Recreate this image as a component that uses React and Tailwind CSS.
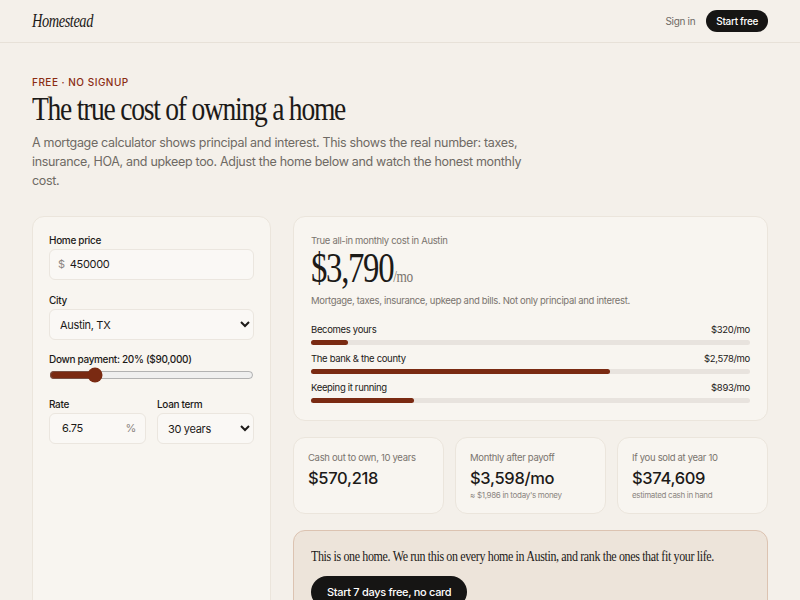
import { useState } from "react";

const SERIF = "font-['Liberation_Serif',serif]";
const SANS = "font-['Inter',sans-serif]";

function fmt(n) {
  return "$" + Math.round(n).toLocaleString("en-US");
}

export default function App() {
  const [price, setPrice] = useState("450000");
  const [city, setCity] = useState("Austin, TX");
  const [down, setDown] = useState(20);
  const [rate, setRate] = useState("6.75");
  const [term, setTerm] = useState("30 years");

  const parts = [
    { label: "Becomes yours", value: 320 },
    { label: "The bank & the county", value: 2578 },
    { label: "Keeping it running", value: 893 },
  ];
  const total = parts.reduce((s, p) => s + p.value, 0) - 1;

  return (
    <div className={`min-h-screen bg-[#f4f0ea] text-[#1c1a18] tracking-[-0.02em] ${SANS}`}>
      {/* --- HEADER --- */}
      <header className="flex items-center justify-between h-[43px] px-8 border-b border-[#e7e1d8]">
        <span
          className={`${SERIF} italic text-[18px] tracking-[-0.03em] origin-left scale-x-[0.8]`}
        >
          Homestead
        </span>
        <div className="flex items-center gap-[11px]">
          <a className="text-[10px] text-[#6f6a64]">Sign in</a>
          <button className="h-[22px] px-[10px] rounded-full bg-[#161514] text-white text-[10px] font-medium">
            Start free
          </button>
        </div>
      </header>

      <main className="px-8 pt-[31px]">
        <p className="text-[10px] leading-[16px] font-medium tracking-[0.05em] text-[#8a2c12]">
          FREE · NO SIGNUP
        </p>
        <h1
          className={`${SERIF} text-[34px] leading-[38px] tracking-[-0.045em] origin-left scale-x-[0.81]`}
        >
          The true cost of owning a home
        </h1>
        <p className="mt-[5px] max-w-[500px] text-[12.5px] leading-[19px] text-[#6f6a64]">
          A mortgage calculator shows principal and interest. This shows the
          real number: taxes, insurance, HOA, and upkeep too. Adjust the home
          below and watch the honest monthly cost.
        </p>

        <div className="mt-[26px] grid grid-cols-[239px_minmax(0,1fr)] gap-[22px]">
          {/* --- INPUTS --- */}
          <div className="h-[400px] rounded-xl border border-[#ebe5dc] bg-[#f8f5f0] px-4 pt-[16px]">
            <Label>Home price</Label>
            <div className="mt-[2px] flex items-center h-[31px] rounded-md border border-[#ebe6df] bg-[#faf8f5] px-[8px]">
              <span className="text-[11px] text-[#8b8580]">$</span>
              <input
                value={price}
                onChange={(e) => setPrice(e.target.value)}
                className="ml-[5px] w-full bg-transparent text-[11px] outline-none"
              />
            </div>

            <Label className="mt-[13px]">City</Label>
            <select
              value={city}
              onChange={(e) => setCity(e.target.value)}
              className="mt-[2px] w-full h-[31px] rounded-md border border-[#ebe6df] bg-[#faf8f5] pl-[6px] pr-[2px] text-[11px] outline-none"
            >
              <option>Austin, TX</option>
              <option>Denver, CO</option>
            </select>

            <Label className="mt-[12px]">
              Down payment: {down}% (${(price * down / 100).toLocaleString("en-US")})
            </Label>
            <input
              type="range"
              min="0"
              max="100"
              value={down}
              onChange={(e) => setDown(+e.target.value)}
              className="mt-[1px] block w-full accent-[#7a2a12]"
            />

            <div className="mt-[14px] grid grid-cols-2 gap-[11px]">
              <div>
                <Label>Rate</Label>
                <div className="mt-[2px] flex items-center h-[31px] rounded-md border border-[#ebe6df] bg-[#faf8f5] pl-[12px] pr-[9px]">
                  <input
                    value={rate}
                    onChange={(e) => setRate(e.target.value)}
                    className="w-full bg-transparent text-[11px] outline-none"
                  />
                  <span className="text-[11px] text-[#8b8580]">%</span>
                </div>
              </div>
              <div>
                <Label>Loan term</Label>
                <select
                  value={term}
                  onChange={(e) => setTerm(e.target.value)}
                  className="mt-[2px] w-full h-[31px] rounded-md border border-[#ebe6df] bg-[#faf8f5] pl-[6px] pr-[2px] text-[11px] outline-none"
                >
                  <option>30 years</option>
                  <option>15 years</option>
                </select>
              </div>
            </div>
          </div>

          {/* --- RESULTS --- */}
          <div className="flex flex-col min-w-0">
            <div className="rounded-xl border border-[#ebe5dc] bg-[#f8f5f0] px-[17px] pt-[17px] pb-[17px]">
              <p className="text-[9.5px] leading-[14px] text-[#7a746e]">
                True all-in monthly cost in Austin
              </p>
              <div
                className={`${SERIF} flex items-baseline origin-left scale-x-[0.78] h-[40px]`}
              >
                <span className="text-[42px] leading-[40px] tracking-[-0.04em]">
                  $3,790
                </span>
                <span className="text-[17px] text-[#7a746e] tracking-[-0.03em]">
                  /mo
                </span>
              </div>
              <p className="mt-[6px] text-[9.5px] leading-[14px] text-[#7a746e]">
                Mortgage, taxes, insurance, upkeep and bills. Not only principal
                and interest.
              </p>

              <div className="mt-[15px] flex flex-col gap-[7.5px]">
                {parts.map((p) => (
                  <div key={p.label}>
                    <div className="flex justify-between text-[9.5px] leading-[14px]">
                      <span>{p.label}</span>
                      <span>{fmt(p.value)}/mo</span>
                    </div>
                    <div className="mt-[2.5px] h-[5px] rounded-full bg-[#e8e3de]">
                      <div
                        className="h-full rounded-full bg-[#7a2a12]"
                        style={{ width: `${(p.value / total) * 100}%` }}
                      />
                    </div>
                  </div>
                ))}
              </div>
            </div>

            <div className="mt-[16px] grid grid-cols-3 gap-[11px]">
              <Stat label="Cash out to own, 10 years" value="$570,218" />
              <Stat
                label="Monthly after payoff"
                value="$3,598/mo"
                sub="≈ $1,986 in today's money"
              />
              <Stat
                label="If you sold at year 10"
                value="$374,609"
                sub="estimated cash in hand"
              />
            </div>

            <div className="mt-[16px] h-[100px] rounded-xl border border-[#dcc3b1] bg-[#ede4da] px-[17px] pt-[14px] overflow-hidden">
              <p
                className={`${SERIF} text-[15px] tracking-[-0.03em] origin-left scale-x-[0.8] whitespace-nowrap`}
              >
                This is one home. We run this on every home in Austin, and rank
                the ones that fit your life.
              </p>
              <button className="mt-[9px] h-[32px] px-[16px] rounded-full bg-[#161514] text-white text-[11px] font-medium">
                Start 7 days free, no card
              </button>
            </div>
          </div>
        </div>
      </main>
    </div>
  );
}

function Label({ children, className = "" }) {
  return (
    <p className={`text-[10px] leading-[14px] font-medium text-[#1c1a18] ${className}`}>
      {children}
    </p>
  );
}

function Stat({ label, value, sub }) {
  return (
    <div className="h-[77px] rounded-xl border border-[#ebe5dc] bg-[#f8f5f0] px-[14px] pt-[13px]">
      <p className="text-[9.5px] leading-[14px] text-[#7a746e]">{label}</p>
      <p className="mt-[2px] text-[16.5px] leading-[22px] font-medium">{value}</p>
      {sub && <p className="mt-[0px] text-[8px] leading-[12px] text-[#8b8580]">{sub}</p>}
    </div>
  );
}
